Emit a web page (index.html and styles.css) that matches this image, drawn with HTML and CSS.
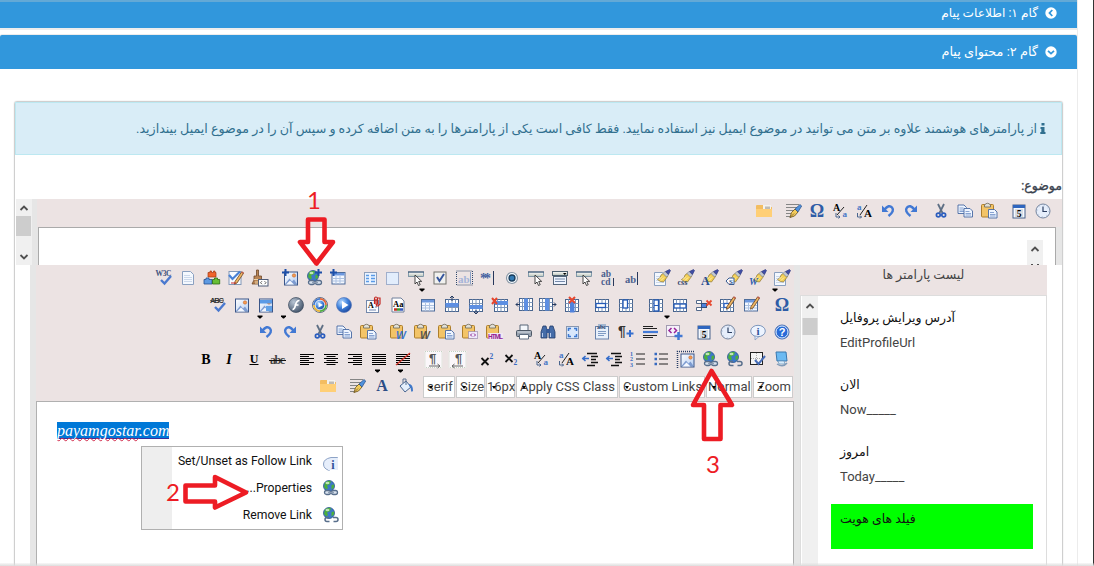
FILE: index.html
```html
<!DOCTYPE html>
<html lang="fa">
<head>
<meta charset="utf-8">
<title>محتوای پیام</title>
<link rel="stylesheet" href="styles.css">
</head>
<body>
<svg class="sprite" aria-hidden="true">
<defs>
<linearGradient id="sky" x1="0" y1="0" x2="1" y2="1"><stop offset="0" stop-color="#fff"/><stop offset="1" stop-color="#b4cdf2"/></linearGradient>
<linearGradient id="btn" x1="0" y1="0" x2="0" y2="1"><stop offset="0" stop-color="#fff"/><stop offset="1" stop-color="#b9c3b8"/></linearGradient>
<radialGradient id="ball" cx=".35" cy=".3" r=".8"><stop offset="0" stop-color="#b9dcff"/><stop offset=".5" stop-color="#3f82dc"/><stop offset="1" stop-color="#163f94"/></radialGradient>
<radialGradient id="grey" cx=".35" cy=".3" r=".8"><stop offset="0" stop-color="#b7c4d3"/><stop offset="1" stop-color="#3b4c63"/></radialGradient>
<path id="dd" d="M-2.5-1.5h5v1L.5 1.5h-1L-2.5-.5z" fill="#000"/>
<path id="tick" d="M5 10l3.500 3.500L15 6" fill="none" stroke="#4a79cf" stroke-width="2.400"/>
<g id="cursor"><path d="M7 5v9l2-2 1.500 3.500 1.700-.8-1.500-3.300h3z" fill="#fff" stroke="#333" stroke-width=".9"/></g>
<g id="btncur"><rect x=".5" y="2" width="15" height="4.500" fill="url(#btn)" stroke="#5b7c96" stroke-width=".7"/><path d="M0 2h16" stroke="#2f4a6a"/><use href="#cursor"/></g>
<g id="grid"><rect x="1.500" y="2.500" width="13" height="12" fill="#fff" stroke="#49658e"/><path d="M1.500 6.500h13M1.500 10.500h13M4.500 2.500v12M8 2.500v12M11.500 2.500v12" stroke="#7f98bb" fill="none"/></g>
<g id="pic"><rect x="1.500" y="2" width="13" height="13" fill="url(#sky)" stroke="#3a5689"/><path d="M2 14l4.500-5.500 2.500 3 2-2 3 4.500z" fill="#7d9bd0"/><path d="M3 14.500l4-4 4 4z" fill="#f4f8ff"/><circle cx="11" cy="5.500" r="1.700" fill="#f39a4f" stroke="#bd5c25" stroke-width=".5"/></g>
<g id="plus"><path d="M3.500 0v7M0 3.500h7" stroke="#1d4fa8" stroke-width="2"/></g>
<g id="globe"><circle cx="7" cy="6" r="5.500" fill="#3d78c9" stroke="#2c568e" stroke-width=".8"/><path d="M3 2.500Q7-.5 9 1.500L8 4 5 5.500 6 8 4.500 9.500 2 7zM9.500 5l2.500-.5v3L9.500 9.500z" fill="#4caf3c"/><ellipse cx="5.500" cy="3" rx="2" ry="1.200" fill="#d9f3d2" opacity=".8"/></g>
<g id="link"><use href="#globe"/><g fill="none" stroke="#596f8c" stroke-width="1.300"><rect x="2.500" y="10.500" width="6" height="4" rx="2" fill="#d9e2ee"/><rect x="9.500" y="10.500" width="6" height="4" rx="2" fill="#d9e2ee"/></g><path d="M6 12.500h6" stroke="#8d9db3" stroke-width="1.500"/></g>
<g id="unlink"><use href="#globe"/><g fill="none" stroke="#596f8c" stroke-width="1.500"><path d="M7 10.500H5a2 2 0 000 4h2.500M11 10.500h3a2 2 0 010 4h-2.500"/></g></g>
<g id="brush"><path d="M10 3l3.500 3.500-4 5.500Q6 12 3.500 9.500q3.500-1.500 3.500-4.500z" fill="#f4cf55" stroke="#8d7430" stroke-width=".7"/><path d="M5 9.500l3-3M7 10.500l3-3" stroke="#fff3b5"/><path d="M9 3.500l2-2 3.500 3.500-2 2z" fill="#c3c9d2" stroke="#5d6675" stroke-width=".5"/><path d="M11.500 1.500L15.500-.5l1 1L14.500 4.500z" fill="#3f4da5" stroke="#27327c" stroke-width=".6"/></g>
<g id="doc"><path d="M2.500 1.500h8l3 3v10h-11z" fill="#f4f8fe" stroke="#8aa0c0"/><path d="M4.500 5.500h5M4.500 7.500h7M4.500 9.500h7M4.500 11.500h7" stroke="#a3b8d8" stroke-dasharray="1 1"/></g>
<g id="clip"><rect x=".5" y="1.500" width="12" height="12.500" rx="1" fill="#f3c467" stroke="#ad7e2c"/><path d="M3.500 4V2Q6.500-1.500 9.500 2v2z" fill="#e1dfd5" stroke="#6b6759" stroke-width=".8"/></g>
<g id="page"><path d="M0 0h6l2.500 2.500V8.500H0z" fill="#eef5ff" stroke="#4769a2" stroke-width=".9"/><path d="M1.500 3h4M1.500 5h5.500M1.500 6.500h5.500" stroke="#6c8dc5" stroke-width=".8"/></g>
<g id="pencil"><path d="M7 11.500L13.500 2l2 1.300L9 13l-2.500 1.200z" fill="#efb765" stroke="#684220" stroke-width=".8"/><path d="M13 2.500l1-1.300 2 1.300-1 1.500z" fill="#bd604e"/></g>
<g id="w3c"><text x="-.5" y="6" font-size="7.500" class="ts" font-weight="700" textLength="16" fill="#3d527d">W3C</text><use href="#tick"/></g>
<g id="bricks"><path d="M4 2.500h2V1h1.500v1.500h2V1H11v1.500h1V7H4z" fill="#f0642c" stroke="#a33a11" stroke-width=".7"/><path d="M0 9.500h2V8h3v1.500h3v4.500H0z" fill="#5e9ae2" stroke="#254f91" stroke-width=".8"/><path d="M8.500 9.500h2V8h3v1.500h2.200v4.500H8.500z" fill="#68bf35" stroke="#286a13" stroke-width=".8"/></g>
<g id="chkpen"><rect x="1" y="1.500" width="12" height="13" fill="#f8fbff" stroke="#8298b8"/><path d="M1 5l3.500 4L12 1.500" stroke="#4880d5" stroke-width="2.200" fill="none"/><use href="#pencil"/><path d="M3 13h5" stroke="#c92828"/></g>
<g id="broom"><path d="M4.500 0h2v6h3v4L11 14H0l2-4V6h2.500z" fill="#b98555" stroke="#6f4828" stroke-width=".8"/><path d="M2 9.500h7.500M4 11v3M6 11v3" stroke="#efd5aa"/><rect x="6.500" y="9.500" width="9.500" height="6.500" fill="#fff" stroke="#4f5d78"/><path d="M10 11.200l-1.500 1.500L10 14.200M12.500 11.200l1.500 1.500-1.500 1.500" stroke="#333" fill="none" stroke-width=".8"/></g>
<g id="picadd"><use href="#pic" x="1"/><use href="#plus" y="-1"/></g>
<g id="linkadd"><use href="#link"/><use href="#plus" x="9" y="-1"/></g>
<g id="tbl"><rect x="1.500" y="2.500" width="13" height="11.500" fill="#f4f8ff" stroke="#4e6d9b"/><rect x="2" y="3" width="12" height="2.500" fill="#6d98df"/><path d="M2 8.500h12M2 11h12M5.500 6v8M9.500 6v8" stroke="#adc2e2"/></g>
<g id="tbladd"><use href="#tbl" x=".5"/><use href="#plus" y="-1"/></g>
<g id="form"><rect x="4.500" y="2.500" width="12" height="12" fill="#eaf3ff" stroke="#315487" stroke-dasharray="1 1"/><path d="M6 5.500h3M6 8.500h3M6 11.500h3M11 5.500h4M11 8.500h4M11 11.500h4" stroke="#5a9ae6" stroke-width="1.600"/></g>
<g id="panel"><rect x="2.500" y="2.500" width="12" height="12" fill="#e2edfc" stroke="#5976a8" stroke-dasharray="1 1"/></g>
<g id="btncurdd"><use href="#btncur"/><use href="#dd" x="14" y="20"/></g>
<g id="chkbox"><rect x="2" y="2" width="12" height="12" fill="#f1f1ef" stroke="#71716d"/><path d="M5 7l2.500 4L12 4" fill="none" stroke="#36559d" stroke-width="2"/></g>
<g id="tarea"><rect x=".5" y="1" width="16" height="14" fill="none" stroke="#31496e" stroke-dasharray="1 1"/><text x="2" y="12.500" font-size="11" class="ts" font-weight="700" fill="#a5b4d9">ab</text><path d="M14.500 2v12" stroke="#8ca2c6"/></g>
<g id="pass"><text x="0" y="13" font-size="14" class="ts" font-weight="700" fill="#4664a2" textLength="11">**</text><path d="M13.500 1v14" stroke="#26375b"/></g>
<g id="radio"><circle cx="8" cy="8" r="5.500" fill="#f7fbff" stroke="#8a98a6" stroke-width="1.200"/><circle cx="8" cy="8" r="3" fill="#337bb5" stroke="#183b5a" stroke-width="1.300"/></g>
<g id="combo"><rect x=".5" y="1.500" width="15" height="4" fill="url(#btn)" stroke="#4d6070"/><path d="M11 3h3.500l-1.700 2z"/><rect x="1.500" y="6.500" width="13" height="8" fill="#eef4ff" stroke="#54657a"/><path d="M3 9h10M3 11.500h10" stroke="#7489a9"/></g>
<g id="abcd"><text x="1" y="7" font-size="9.500" class="ts" font-weight="700" fill="#4b5f8e">ab</text><text x="1" y="15" font-size="9.500" class="ts" font-weight="700" fill="#4b5f8e">cd</text><path d="M13.500 8v8" stroke="#29395c"/></g>
<g id="abfield"><text x="1" y="13" font-size="10.500" class="ts" font-weight="700" fill="#4b5f8e">ab</text><path d="M13.500 2v13" stroke="#29395c"/></g>
<g id="brdoc"><use href="#doc" x="-2" y="1"/><use href="#brush"/></g>
<g id="brdocdd"><use href="#brdoc"/><use href="#dd" x="1" y="20"/></g>
<g id="brcss"><use href="#brush"/><text x="-.5" y="14.500" font-size="8" class="ts" font-weight="700" fill="#31466f">css</text></g>
<g id="bra"><use href="#brush"/><text x="-1" y="15" font-size="12" class="ts" font-weight="700" fill="#294e90">A</text></g>
<g id="brs"><use href="#brush"/><path d="M0 11l3-3h5v6.500H3z" fill="#f7faff" stroke="#3a5a8f"/><text x="3" y="14" font-size="7" class="ts" font-weight="700" fill="#27477f">S</text></g>
<g id="brw"><use href="#brush"/><text x="-1" y="15" font-size="10" class="ts" font-weight="700" font-style="italic" fill="#2c5daf">W</text></g>
<g id="spell"><text x="0" y="6" font-size="7.500" class="tn" font-weight="700" textLength="14" fill="#333">ABC</text><path d="M0 3.500h14" stroke="#333" stroke-width=".6"/><use href="#tick"/></g>
<g id="picmap"><use href="#pic"/><rect x="2" y="3" width="12" height="3.500" fill="#5a9ae6"/><rect x="8" y="9" width="6" height="5" fill="#62a2e8"/><use href="#dd" x="2" y="20"/></g>
<g id="flash"><circle cx="8" cy="8" r="7.500" fill="url(#grey)" stroke="#39475a" stroke-width=".7"/><path d="M11.500 3.500Q8.500 3.500 7.500 8T4.500 12.500M6.500 8h4" stroke="#fff" stroke-width="1.700" fill="none"/><use href="#dd" x="-4.500" y="20"/></g>
<g id="wmp"><circle cx="8" cy="8" r="7.500" fill="#fff" stroke="#3e4d6c" stroke-width=".8"/><g fill="none" stroke-width="1.800"><path d="M2 8a6 6 0 016-6" stroke="#3e77cd"/><path d="M8 2a6 6 0 016 6" stroke="#e36334"/><path d="M14 8a6 6 0 01-6 6" stroke="#50ae3e"/><path d="M8 14a6 6 0 01-6-6" stroke="#e8b637"/></g><circle cx="8" cy="8" r="4.800" fill="url(#ball)" stroke="#fff" stroke-width=".6"/><path d="M6.500 5.500v5L11 8z" fill="#fff"/></g>
<g id="play"><circle cx="8" cy="8" r="7.500" fill="url(#ball)" stroke="#5779ba" stroke-width=".7"/><path d="M6 4v8l6.500-4z" fill="#fff"/></g>
<g id="attach"><rect x=".5" y="3.500" width="12" height="12" fill="#fafcff" stroke="#7388ab"/><text x="2" y="11" font-size="8" class="ts" font-weight="700">A</text><path d="M3 13h7M9 10h2" stroke="#7287b1"/><path d="M8.500 7V2q0-2 1.500-2t1.500 2v5q-1.500 1.500-1.500-.5V2M11.500 1h2.500v6q-2 3-4 1.500" fill="none" stroke="#c32722" stroke-width="1.200"/></g>
<g id="css"><path d="M2 1h9l3 3v11H2z" fill="#fff" stroke="#70809c"/><text x="3" y="9.500" font-size="8.500" class="ts" font-weight="700">Aa</text><path d="M4 12.500h3" stroke="#c52b20" stroke-width="2.500"/><path d="M7 12.500h3" stroke="#3a9c32" stroke-width="2.500"/><path d="M10 12.500h3" stroke="#3458be" stroke-width="2.500"/></g>
<g id="rowup"><use href="#grid"/><rect x="1.500" y="6" width="13" height="4" fill="#5d8fe2"/><path d="M8 4V-1M6 1l2-2 2 2" stroke="#243a61" fill="none"/></g>
<g id="rowdn"><use href="#grid"/><rect x="1.500" y="8" width="13" height="4" fill="#5d8fe2"/><path d="M8 13v4M6 15l2 2 2-2" stroke="#243a61" fill="none"/></g>
<g id="rowdel"><use href="#grid" x="1"/><rect x="3" y="4" width="13" height="4" fill="#5d8fe2"/><path d="M0 1l5 6M5 1L0 7" stroke="#e6462d" stroke-width="2"/></g>
<g id="colL"><use href="#grid" x="2" y="-1"/><rect x="8" y="1.500" width="4" height="12" fill="#5d8fe2"/><path d="M4 7.500h-4M2 5.500l-2 2 2 2" stroke="#243a61" fill="none"/></g>
<g id="colR"><use href="#grid" x="-2" y="-1"/><rect x="5" y="1.500" width="4" height="12" fill="#5d8fe2"/><path d="M12 7.500h4M14 5.500l2 2-2 2" stroke="#243a61" fill="none"/></g>
<g id="coldel"><use href="#grid"/><rect x="6" y="5" width="4.500" height="10.500" fill="#4f82dd"/><path d="M5 0l6 6M11 0L5 6" stroke="#e6462d" stroke-width="2"/></g>
<g id="cellh"><use href="#grid"/><rect x="2" y="6.500" width="9.500" height="4" fill="#fff" stroke="#245ab6" stroke-width="1.300"/></g>
<g id="cellv"><use href="#grid"/><rect x="5" y="3" width="4.500" height="8" fill="#fff" stroke="#245ab6" stroke-width="1.300"/></g>
<g id="splitv"><use href="#grid"/><rect x="6" y="3" width="4.500" height="11" fill="#fff" stroke="#245ab6" stroke-width="1.300"/><path d="M6 8.500h4.500" stroke="#245ab6"/><use href="#dd" x="19" y="20"/></g>
<g id="splith"><use href="#grid"/><rect x="2" y="7" width="12" height="4" fill="#fff" stroke="#245ab6" stroke-width="1.300"/><path d="M8 7v4" stroke="#245ab6"/></g>
<g id="celldel"><path d="M.5 3.500h5v3h-5zM.5 10.500h5v3h-5z" fill="#fff" stroke="#53698b"/><rect x="5.500" y="6.500" width="5" height="4" fill="#4e83db" stroke="#334f7f"/><path d="M10.500 3.500l5 5M15.500 3.500l-5 5" stroke="#e6462d" stroke-width="1.800"/></g>
<g id="cellpen"><use href="#grid" x="-1"/><rect x="4" y="6.500" width="5" height="4" fill="#fff" stroke="#2863c3" stroke-width="1.300"/><use href="#pencil" y="-2"/></g>
<g id="tblpen"><use href="#tbl" x="-1"/><use href="#pencil" y="-2"/></g>
<g id="omega"><text x="8" y="14" text-anchor="middle" font-size="18" class="ts" font-weight="700" fill="#2e5ca6">Ω</text></g>
<g id="undo"><path d="M4.500 6.500Q9 1 12 4.500T8.500 13" fill="none" stroke="#4279d4" stroke-width="2.500"/><path d="M2 2.500v6.500h6.500z" fill="#4279d4"/></g>
<g id="redo"><use href="#undo" transform="matrix(-1 0 0 1 16 0)"/></g>
<g id="cut"><path d="M5 1l4.500 9M11 1L6.500 10" stroke="#5e6f84" stroke-width="1.800"/><circle cx="5.300" cy="12" r="1.900" fill="none" stroke="#2c5ebe" stroke-width="1.700"/><circle cx="10.700" cy="12" r="1.900" fill="none" stroke="#2c5ebe" stroke-width="1.700"/></g>
<g id="copy"><use href="#page" x="1" y="2"/><use href="#page" x="7" y="5.500"/></g>
<g id="paste"><use href="#clip"/><use href="#page" x="7.500" y="6.500"/></g>
<g id="pastew"><use href="#clip"/><text x="6" y="15" font-size="10.500" class="tn" font-weight="700" font-style="italic" fill="#3b75cd">W</text></g>
<g id="pastewc"><use href="#clip"/><text x="6" y="15" font-size="10.500" class="tn" font-weight="700" font-style="italic" fill="#555">W</text></g>
<g id="pastecode"><use href="#clip"/><rect x="6.500" y="7.500" width="9" height="7" fill="#eee9fb" stroke="#7d6a9d" stroke-dasharray="1 1"/><path d="M10 9.500L8.500 11l1.500 1.500M12 9.500l1.500 1.500-1.500 1.500" fill="none" stroke="#8e248e"/></g>
<g id="pastehtml"><use href="#clip"/><rect x="2" y="9" width="15" height="7" fill="#f0e8f3"/><text x="2" y="15" font-size="6.500" class="tn" font-weight="700" textLength="15" fill="#942092">HTML</text></g>
<g id="print"><path d="M4 1h8v6H4z" fill="#f4f7fb" stroke="#566476"/><rect x=".5" y="6.500" width="15" height="6" rx="1" fill="#98a2af" stroke="#4d5866"/><path d="M3.500 10.500h9V15h-9z" fill="#fff" stroke="#5d6c80"/><path d="M1.500 8h13" stroke="#d7dee7"/></g>
<g id="find"><path d="M3 2h3l1 4v8H1V8zM10 2h3l2 6v6H9V6z" fill="#456ca8" stroke="#233e6b" stroke-width=".8"/><path d="M6 5h4v4H6z" fill="#365b99"/><path d="M2.500 9v4M10.500 9v4" stroke="#b5cbee"/></g>
<g id="selall"><rect x="2.500" y="2.500" width="12" height="12" fill="#d8e7fb" stroke="#31496e" stroke-dasharray="1 1"/><path d="M4.500 7V4.500H7M12.500 7V4.500H10M4.500 10v2.500H7M12.500 10v2.500H10" fill="none" stroke="#3c79d1" stroke-width="1.500"/></g>
<g id="clipabc"><rect x="1.500" y="2.500" width="13" height="12.500" fill="#e8f0fb" stroke="#6882ab"/><rect x="4" y="0" width="8" height="4" fill="#a5b7d0"/><text x="3" y="4.500" font-size="6" class="ts" font-weight="700" fill="#28426e">abc</text><path d="M4 7.500h8M4 9.500h8M4 11.500h6" stroke="#7f9bc4"/></g>
<g id="paraadd"><text x="0" y="12" font-size="14" class="tn" font-weight="700" fill="#333">¶</text><path d="M12 6v7M8.500 9.500h7" stroke="#3770cf" stroke-width="2"/></g>
<g id="hr"><path d="M1 2.500h10M1 4.500h14M1 11.500h14M1 13.500h10" stroke="#222"/><path d="M1 8h15" stroke="#437ad6" stroke-width="2.200"/></g>
<g id="codeadd"><rect x=".5" y="1.500" width="13" height="11" fill="#f5f0fa" stroke="#524d74" stroke-dasharray="1 1"/><path d="M5.500 4L3 6.500 5.500 9M8 4l2.500 2.500L8 9" stroke="#992499" stroke-width="1.500" fill="none"/><path d="M12.500 8v8M8.500 12h8" stroke="#4379d4" stroke-width="2.500"/></g>
<g id="cal"><rect x="2" y="2" width="12" height="13" fill="#f5f9ff" stroke="#49638b"/><path d="M2 3.500h12" stroke="#2f66bf" stroke-width="3"/><rect x="4" y="6" width="8" height="8" fill="#d8dde4"/><text x="8" y="13.500" text-anchor="middle" font-size="9.500" class="ts" font-weight="700">5</text></g>
<g id="clock"><circle cx="8" cy="8" r="7" fill="#e6eefb" stroke="#74849e"/><path d="M8 3.500V8.500h4" stroke="#2c3e60" stroke-width="1.200" fill="none"/><circle cx="8" cy="8" r="5.600" fill="none" stroke="#b7c8e3" stroke-dasharray="1 3.400"/></g>
<g id="info"><ellipse cx="8" cy="7" rx="7.300" ry="5.700" fill="#edf4ff" stroke="#7d96bc"/><path d="M5 12v4l4-3.500z" fill="#dbe7fa" stroke="#7d96bc" stroke-width=".7"/><text x="8" y="11" text-anchor="middle" font-size="11" class="ts" font-weight="700" fill="#31529b">i</text></g>
<g id="infocut"><path d="M16 2.500H9Q1.500 4 1.500 9t6 6.500" fill="#e6eefb" stroke="#8da3c6"/><path d="M16 2.500V15H6V7z" fill="#e6eefb"/><text x="11" y="13.500" text-anchor="middle" font-size="12" class="ts" font-weight="700" fill="#31529b">i</text></g>
<g id="help"><circle cx="8" cy="8" r="7" fill="#286bd8" stroke="#4c6fae"/><circle cx="8" cy="8" r="6" fill="none" stroke="#e1efff"/><text x="8" y="12" text-anchor="middle" font-size="11" class="tn" font-weight="700" fill="#fff">?</text></g>
<g id="bold"><text x="8" y="13" text-anchor="middle" font-size="14" class="ts" font-weight="700">B</text></g>
<g id="ital"><text x="7" y="13" text-anchor="middle" font-size="14" class="ts" font-style="italic" font-weight="700">I</text></g>
<g id="under"><text x="8" y="11.500" text-anchor="middle" font-size="12" class="ts" font-weight="700">U</text><path d="M3.500 13.500h9" stroke="#000"/></g>
<g id="strike"><text x="0" y="13" font-size="12" class="ts" font-weight="700" textLength="15" fill="#444">abc</text><path d="M-1 9.500h17" stroke="#111"/></g>
<path id="al" d="M0 3.500h14M0 5.500h9M0 7.500h14M0 9.500h9M0 11.500h14M0 13.500h9" stroke="#000"/>
<path id="ac" d="M0 3.500h14M2.500 5.500h9M0 7.500h14M2.500 9.500h9M0 11.500h14M2.500 13.500h9" stroke="#000"/>
<path id="ar" d="M0 3.500h14M5 5.500h9M0 7.500h14M5 9.500h9M0 11.500h14M5 13.500h9" stroke="#000"/>
<g id="aj"><path d="M0 3.500h14M0 5.500h14M0 7.500h14M0 9.500h14M0 11.500h14M0 13.500h14" stroke="#000"/></g>
<g id="ajdd"><use href="#aj"/><use href="#dd" x="5.500" y="20"/></g>
<g id="anone"><use href="#aj"/><path d="M0 14L14 2" stroke="#d13428" stroke-width="1.400"/><use href="#dd" x="4.500" y="20"/></g>
<g id="ltr"><rect x="-1.500" y="0" width="18" height="17" fill="#fbf7fa"/><rect x="-1" y=".5" width="17" height="16" fill="none" stroke="#c5d3c3" stroke-dasharray="1 1"/><text x="3" y="12" font-size="13" class="tn" font-weight="700" fill="#555">¶</text><path d="M3 15h11M11.500 13l2.500 2-2.500 2" stroke="#666" fill="none"/></g>
<g id="rtl"><rect x="-1.500" y="0" width="18" height="17" fill="#fbf7fa"/><rect x="-1" y=".5" width="17" height="16" fill="none" stroke="#c5d3c3" stroke-dasharray="1 1"/><text x="5" y="12" font-size="13" class="tn" font-weight="700" fill="#555">¶</text><path d="M13 15H2M4.500 13L2 15l2.500 2" stroke="#666" fill="none"/></g>
<g id="sup"><path d="M1.500 7l7 7M8.500 7l-7 7" stroke="#111" stroke-width="1.800"/><text x="9.500" y="8" font-size="7.500" class="ts" font-weight="700" fill="#3a6ac0">2</text></g>
<g id="sub"><path d="M1.500 4l7 7M8.500 4l-7 7" stroke="#111" stroke-width="1.800"/><text x="9.500" y="14" font-size="7.500" class="ts" font-weight="700" fill="#3a6ac0">2</text></g>
<g id="lower"><text x="0" y="8" font-size="10" class="ts" font-weight="700">A</text><path d="M4 12L11 4" stroke="#222"/><text x="9.500" y="13.500" font-size="9" class="ts" font-weight="700" fill="#4877c7">a</text><path d="M3 10v4h4M5.500 12.500L7 14l-1.500 1.500" stroke="#49658e" fill="none"/></g>
<g id="upper"><text x="1" y="6.500" font-size="9" class="ts" font-weight="700" fill="#4877c7">a</text><path d="M4 12L11 2" stroke="#222"/><text x="8" y="13.500" font-size="11" class="ts" font-weight="700">A</text><path d="M1.500 10v4h4M4 12.500L5.500 14 4 15.500" stroke="#49658e" fill="none"/></g>
<g id="outd"><path d="M5 2.500h10M9 5.500h7M9 8.500h5M9 11.500h7M5 14.500h8" stroke="#111" stroke-width="1.300"/><path d="M0 7.500h7M3.500 5L.8 7.500l2.700 2.500" stroke="#356dca" stroke-width="1.500" fill="none"/></g>
<g id="ol"><path d="M6 3h9M6 8h9M6 13h9" stroke="#222"/><g class="ts" font-size="6" font-weight="700" fill="#3569c0"><text x="0" y="5">1</text><text x="0" y="10">2</text><text x="0" y="15.500">3</text></g></g>
<g id="ul"><path d="M5 3h9M5 8h9M5 13h9" stroke="#222"/><path d="M.5 3H3M.5 8H3M.5 13H3" stroke="#3569c0" stroke-width="2.300"/></g>
<g id="picframe"><path d="M-.5 17V.5H17" fill="none" stroke="#273c64" stroke-width="1.500" stroke-dasharray="1 1"/><use href="#pic" x="1.500" y="1"/></g>
<g id="valid"><rect x=".5" y="1.500" width="12" height="12" fill="#f4f4f4" stroke="#222"/><path d="M1 7.500h11M6.500 2v11" stroke="#aaa" stroke-dasharray="1 1"/><path d="M5 9l3.500 4L15 5" fill="none" stroke="#476cb7" stroke-width="2"/></g>
<g id="screen"><path d="M2 1h10l1 9H3z" fill="#6cbaf2" stroke="#3b78ae"/><path d="M4 10h6l1 3H5z" fill="#d8ebfa" stroke="#6a93b8" stroke-width=".7"/><path d="M3 13q6 4 10-1" fill="none" stroke="#809bb8" stroke-width="1.500"/></g>
<g id="folder"><path d="M0 3q0-1 1-1h6l1 2h8v10H0z" fill="#f3bd61"/><path d="M7 2h8v5H7z" fill="#f4f2ee"/><path d="M9 3.500h5V6H9z" fill="#bdbab5"/><path d="M0 6h16v8H0z" fill="#ffcf76"/></g>
<g id="pen"><path d="M0 1.500h13M0 4.500h11M0 7.500h8M0 10.500h5M0 13.500h5" stroke="#858585"/><path d="M4 14.500l1.500-5L9 6l3 3-3.500 4z" fill="#f2cb5c" stroke="#755d26" stroke-width=".9"/><path d="M9 6l5-4.500 1.700 1.500L12 9z" fill="#4f91dd" stroke="#2a4f84" stroke-width=".7"/><path d="M4 14.500l4-4" stroke="#765b28" stroke-width=".8"/></g>
<g id="fontc"><text x="8" y="13" text-anchor="middle" font-size="16" class="ts" font-weight="700" fill="#2c4d86">A</text></g>
<g id="bucket"><path d="M2 8l6-5 5 6-6 5z" fill="#e5effb" stroke="#47648f"/><path d="M5 5V1h3v6" fill="none" stroke="#5b708f"/><path d="M11 6q4 0 4 7-2 2-2-1 0-3-2-4z" fill="#3f78c9"/></g>
</defs>
</svg>

<div class="page" dir="rtl">
  <header class="step step-first"><svg class="chev" viewBox="0 0 12 12"><circle cx="6" cy="6" r="5.700" fill="#fff"/><path d="M7.300 3L4.500 6l2.800 3" fill="none" stroke="#3197dc" stroke-width="1.800"/></svg><span>گام ۱: اطلاعات پیام</span></header>
  <header class="step step-open"><svg class="chev" viewBox="0 0 12 12"><circle cx="6" cy="6" r="5.700" fill="#fff"/><path d="M3 4.800l3 2.800 3-2.800" fill="none" stroke="#3197dc" stroke-width="1.800"/></svg><span>گام ۲: محتوای پیام</span></header>

  <main class="box">
    <div class="alert"><svg class="infoi" viewBox="0 0 6 11"><path d="M1.500 0h3v2.400h-3zM.5 4h4v5h1v2H.3V9h1V6H.5z" fill="#31708f"/></svg><span>از پارامترهای هوشمند علاوه بر متن می توانید در موضوع ایمیل نیز استفاده نمایید. فقط کافی است یکی از پارامترها را به متن اضافه کرده و سپس آن را در موضوع ایمیل بیندازید.</span></div>
    <div class="label">موضوع:</div>

    <section class="subject" dir="ltr">
      <div class="scroll"><svg viewBox="0 0 16 66"><path d="M4.500 11L8 7.500l3.500 3.500M4.500 56L8 59.500l3.500-3.500" fill="none" stroke="#505050" stroke-width="1.800"/><path d="M0 17h15v20H0z" fill="#cdcdcd"/></svg></div>
      <div class="subject-main">
        <div class="row row-top">
          <div class="g"><svg class="i"><use href="#folder"/></svg></div>
          <div class="g tight"><svg class="i"><use href="#pen"/></svg><svg class="i"><use href="#omega"/></svg><svg class="i"><use href="#lower"/></svg><svg class="i"><use href="#upper"/></svg><svg class="i"><use href="#undo"/></svg><svg class="i"><use href="#redo"/></svg></div>
          <div class="g"><svg class="i"><use href="#cut"/></svg><svg class="i"><use href="#copy"/></svg><svg class="i"><use href="#paste"/></svg></div>
          <div class="g"><svg class="i"><use href="#cal"/></svg><svg class="i"><use href="#clock"/></svg></div>
        </div>
        <div class="subject-field"><svg class="mini" viewBox="0 0 16 25"><path d="M4.500 11L8 7.500l3.500 3.500" fill="none" stroke="#505050" stroke-width="1.800"/><path d="M4 24.500h2M10 24.500h2" stroke="#505050"/></svg></div>
      </div>
    </section>

    <section class="body" dir="ltr">
      <div class="editor">
        <div class="tools">
          <div class="row">
            <div class="g"><svg class="i"><use href="#w3c"/></svg><svg class="i"><use href="#doc"/></svg><svg class="i"><use href="#bricks"/></svg><svg class="i"><use href="#chkpen"/></svg><svg class="i"><use href="#broom"/></svg></div>
            <div class="g"><svg class="i"><use href="#picadd"/></svg><svg class="i"><use href="#linkadd"/></svg><svg class="i"><use href="#tbladd"/></svg></div>
            <div class="g"><svg class="i"><use href="#form"/></svg><svg class="i"><use href="#panel"/></svg><svg class="i"><use href="#btncurdd"/></svg><svg class="i"><use href="#chkbox"/></svg><svg class="i"><use href="#tarea"/></svg><svg class="i"><use href="#pass"/></svg><svg class="i"><use href="#radio"/></svg><svg class="i"><use href="#btncur"/></svg><svg class="i"><use href="#combo"/></svg><svg class="i"><use href="#btncur"/></svg><svg class="i"><use href="#abcd"/></svg><svg class="i"><use href="#abfield"/></svg></div>
            <div class="g"><svg class="i"><use href="#brdoc"/></svg><svg class="i"><use href="#brcss"/></svg><svg class="i"><use href="#bra"/></svg><svg class="i"><use href="#brs"/></svg><svg class="i"><use href="#brw"/></svg><svg class="i"><use href="#brdocdd"/></svg></div>
          </div>
          <div class="row">
            <div class="g"><svg class="i"><use href="#spell"/></svg><svg class="i"><use href="#pic"/></svg><svg class="i"><use href="#picmap"/></svg></div>
            <div class="g"><svg class="i"><use href="#flash"/></svg><svg class="i"><use href="#wmp"/></svg><svg class="i"><use href="#play"/></svg></div>
            <div class="g"><svg class="i"><use href="#attach"/></svg><svg class="i"><use href="#css"/></svg></div>
            <div class="g"><svg class="i"><use href="#tbl"/></svg><svg class="i"><use href="#rowup"/></svg><svg class="i"><use href="#rowdn"/></svg><svg class="i"><use href="#rowdel"/></svg><svg class="i"><use href="#colL"/></svg><svg class="i"><use href="#colR"/></svg><svg class="i"><use href="#coldel"/></svg></div>
            <div class="g"><svg class="i"><use href="#cellh"/></svg><svg class="i"><use href="#cellv"/></svg></div>
            <div class="g"><svg class="i"><use href="#splitv"/></svg><svg class="i"><use href="#splith"/></svg><svg class="i"><use href="#celldel"/></svg><svg class="i"><use href="#cellpen"/></svg><svg class="i"><use href="#tblpen"/></svg></div>
            <div class="g"><svg class="i"><use href="#omega"/></svg></div>
          </div>
          <div class="row">
            <div class="g"><svg class="i"><use href="#undo"/></svg><svg class="i"><use href="#redo"/></svg></div>
            <div class="g"><svg class="i"><use href="#cut"/></svg><svg class="i"><use href="#copy"/></svg><svg class="i"><use href="#paste"/></svg></div>
            <div class="g"><svg class="i"><use href="#pastew"/></svg><svg class="i"><use href="#pastewc"/></svg><svg class="i"><use href="#paste"/></svg><svg class="i"><use href="#pastecode"/></svg><svg class="i"><use href="#pastehtml"/></svg></div>
            <div class="g"><svg class="i"><use href="#print"/></svg><svg class="i"><use href="#find"/></svg><svg class="i"><use href="#selall"/></svg></div>
            <div class="g"><svg class="i"><use href="#clipabc"/></svg><svg class="i"><use href="#paraadd"/></svg><svg class="i"><use href="#hr"/></svg><svg class="i"><use href="#codeadd"/></svg></div>
            <div class="g"><svg class="i"><use href="#cal"/></svg><svg class="i"><use href="#clock"/></svg></div>
            <div class="g"><svg class="i"><use href="#info"/></svg><svg class="i"><use href="#help"/></svg></div>
          </div>
          <div class="row">
            <div class="g"><svg class="i"><use href="#bold"/></svg><svg class="i"><use href="#ital"/></svg><svg class="i"><use href="#under"/></svg><svg class="i"><use href="#strike"/></svg></div>
            <div class="g"><svg class="i"><use href="#al"/></svg><svg class="i"><use href="#ac"/></svg><svg class="i"><use href="#ar"/></svg><svg class="i"><use href="#ajdd"/></svg><svg class="i"><use href="#anone"/></svg></div>
            <div class="g"><svg class="i"><use href="#ltr"/></svg><svg class="i"><use href="#rtl"/></svg></div>
            <div class="g"><svg class="i"><use href="#sup"/></svg><svg class="i"><use href="#sub"/></svg></div>
            <div class="g"><svg class="i"><use href="#lower"/></svg><svg class="i"><use href="#upper"/></svg><svg class="i"><use href="#outd"/></svg><svg class="i"><use href="#outd"/></svg><svg class="i"><use href="#ol"/></svg><svg class="i"><use href="#ul"/></svg><svg class="i"><use href="#picframe"/></svg><svg class="i"><use href="#link"/></svg><svg class="i"><use href="#unlink"/></svg><svg class="i"><use href="#valid"/></svg><svg class="i"><use href="#screen"/></svg></div>
          </div>
          <div class="row row-selects">
            <div class="g"><svg class="i"><use href="#folder"/></svg></div>
            <div class="g"><svg class="i"><use href="#pen"/></svg><svg class="i"><use href="#fontc"/></svg><svg class="i"><use href="#bucket"/></svg></div>
            <div class="selects">
              <div class="sel w1">serif</div><div class="sel w2">Size</div><div class="sel w3">16px</div><div class="sel w4">Apply CSS Class</div><div class="sel w5">Custom Links</div><div class="sel w6">Normal</div><div class="sel w7">Zoom</div>
            </div>
          </div>
        </div>
        <div class="canvas">
          <span class="picked"><span class="misspelt">payamgostar</span>.com</span>
          <div class="menu">
            <div class="menu-item"><span>Set/Unset as Follow Link</span><svg class="i low"><use href="#infocut"/></svg></div>
            <div class="menu-item"><span>...Properties</span><svg class="i"><use href="#link"/></svg></div>
            <div class="menu-item"><span>Remove Link</span><svg class="i"><use href="#unlink"/></svg></div>
          </div>
        </div>
      </div>
      <aside class="params">
        <h2>لیست پارامتر ها</h2>
        <div class="params-list">
          <div class="scroll"><svg viewBox="0 0 16 66"><path d="M4.500 12L8 8.500l3.500 3.500" fill="none" stroke="#505050" stroke-width="1.800"/><path d="M.5 22h15v17H.5z" fill="#cdcdcd"/></svg></div>
          <div class="items">
            <div class="item"><b>آدرس ویرایش پروفایل</b><span>EditProfileUrl</span></div>
            <div class="item"><b>الان</b><span>Now_____</span></div>
            <div class="item"><b>امروز</b><span>Today_____</span></div>
            <div class="item green"><b>فیلد های هویت</b></div>
          </div>
        </div>
      </aside>
    </section>
  </main>
</div>

<svg class="marks" viewBox="0 0 1094 566">
  <g fill="none" stroke="#ed1c24" stroke-width="4.600" stroke-linejoin="round">
    <path d="M308 219.500h16.500v22.500h8.500L316.500 263.500 300 242h8z"/>
    <path d="M185.500 485.500H215v-8.500L246 492.500 215 507.500v-6H185.500z"/>
    <path d="M711.500 371L732 405h-11.500v34h-16.500v-34h-11z"/>
  </g>
  <g class="nums"><text x="307" y="209">1</text><text x="166" y="501">2</text><text x="706" y="473">3</text></g>
</svg>
<div class="edge-bottom"></div>
</body>
</html>
```
FILE: styles.css
```css
* { box-sizing: border-box; }
body {
  margin: 0;
  height: 566px;
  overflow: hidden;
  background: #fff;
  border-right: 1px solid #333;
  font: 13px/20px Roboto, "DejaVu Sans", sans-serif;
  color: #444;
}
.sprite { position: absolute; width: 0; height: 0; }
.ts { font-family: "Liberation Serif", serif; }
.tn { font-family: "Liberation Sans", sans-serif; }

.page { width: 1078px; height: 566px; border-right: 1px solid #ececec; overflow: hidden; }
.step {
  display: flex;
  align-items: center;
  gap: 7px;
  height: 34px;
  padding: 0 20px;
  background: #3197dc;
  color: #fff;
  font-size: 12.200px;
  border-top-right-radius: 2px;
  border-top-left-radius: 2px;
  box-shadow: 0 -1px 0 #ececec;
}
.step-open { font-size: 12.900px; }
.step-first {
  height: 28px;
  margin-bottom: 7px;
  padding-bottom: 4px;
  border-top: 2px solid #63a9d6;
  border-radius: 0;
  box-shadow: 0 2px 0 #ededed;
}
.chev { width: 12px; height: 12px; }

.box {
  width: 1049px;
  height: 470px;
  margin: 32px 14px 0 0;
  border: 1px solid #cfcfcf;
  border-radius: 3px;
  box-shadow: 0 0 1px #bbb;
}
.alert {
  display: flex;
  align-items: center;
  gap: 3px;
  height: 53px;
  padding: 0 15px;
  border: 1px solid #bce8f1;
  background: #d9edf7;
  color: #31708f;
  font-size: 12.650px;
  white-space: nowrap;
}
.infoi { width: 6px; height: 11px; }
.label { height: 44px; padding-top: 20px; font-size: 12.500px; line-height: 22px; color: #39424e; -webkit-text-stroke: .35px #39424e; }

.subject { display: flex; height: 66px; padding-left: 1px; }
.scroll { width: 16px; background: #f0f0f0; flex: none; }
.scroll svg { display: block; width: 16px; height: 66px; }
.subject-main { flex: 1; padding: 0 6px 0 5px; background: #e6e6e6; }
.row { display: flex; justify-content: flex-end; gap: 14px; height: 27px; padding: 5px 4px 0 0; background: #ece3e3; }
.row-top { height: 28px; margin-right: -6px; padding: 4px 11px 0 0; }
.g { display: flex; gap: 8px; }
.tight { gap: 7.500px; }
.i { width: 16px; height: 16px; overflow: visible; flex: none; display: block; }
.subject-field {
  display: flex;
  justify-content: flex-end;
  align-items: flex-end;
  height: 38px;
  padding-right: 12px;
  border: 1px solid #aaa;
  border-bottom: 0;
  margin-left: 1px;
  background: #fff;
}
.mini { width: 16px; height: 25px; background: #f0f0f0; }

.body { display: flex; width: 1017px; height: 301px; margin-right: 15px; background: #e6e6e6; padding-left: 6px; }
.editor { width: 758px; flex: none; }
.tools { height: 136px; background: #ece3e3; }
.row-selects { padding-right: 1px; gap: 14px; }
.selects { display: flex; gap: 1px; margin: -2px 0 0 -5px; }
.sel {
  position: relative;
  height: 22px;
  padding-left: 3px;
  border: 1px solid #ccc;
  background: #fff;
  line-height: 20px;
  white-space: nowrap;
}
.sel::after {
  content: "";
  position: absolute;
  left: 5px;
  top: 9px;
  border: 2.500px solid transparent;
  border-top: 3px solid #000;
}
.w1 { width: 32px; } .w2 { width: 29px; } .w3 { width: 29px; padding-left: 0; } .w4 { width: 102px; }
.w5 { width: 86px; } .w6 { width: 46px; padding-left: 1px; } .w7 { width: 40px; }
.canvas { position: relative; height: 165px; padding: 20px; border: 1px solid #b0b0b0; border-bottom: 0; background: #fff; }
.picked {
  display: inline-block;
  width: 112px;
  height: 17px;
  border-bottom: 1px solid #3a2f9c;
  background: #0078d7;
  color: #fff;
  font: italic 16px/17px "Liberation Serif", serif;
  white-space: nowrap;
}
.misspelt { text-decoration: underline wavy #d22a4a 1px; text-underline-offset: 1px; text-decoration-skip-ink: none; }
.menu {
  position: absolute;
  left: 104px;
  top: 44px;
  width: 202px;
  height: 84px;
  border: 1px solid #b0b0b0;
  background: linear-gradient(90deg, #eee 30px, #fff 30px);
  color: #111;
  font-size: 12.200px;
}
.menu-item { display: flex; justify-content: flex-end; align-items: center; gap: 10px; height: 27px; padding: 1px 4px 0 0; }
.low { margin-top: 4px; }

.params { width: 247px; margin-left: 6px; }
.params h2 { height: 30px; margin: 0; background: #ece3e3; color: #444; font-size: 12.500px; font-weight: 400; line-height: 20px; text-align: center; }
.params-list { display: flex; height: 271px; padding-left: 1px; border: 1px solid #ddd; background: #fff; }
.items { padding: 7px 13px 0; flex: 1; }
.item { height: 45px; margin-bottom: 22px; padding: 2px 9px; color: #444; }
.item b, .item span { display: block; line-height: 25px; }
.item b { color: #111; font-size: 12.500px; font-weight: 400; }
.green { background: #0f0; }

.marks { position: absolute; left: 0; top: 0; width: 1094px; height: 566px; pointer-events: none; }
.nums { font: 24px Lato, sans-serif; fill: #ed1c24; }
.edge-bottom { position: absolute; left: 0; top: 563px; width: 1094px; height: 3px; background: linear-gradient(rgba(220,220,220,.2), #ddd); }
```
